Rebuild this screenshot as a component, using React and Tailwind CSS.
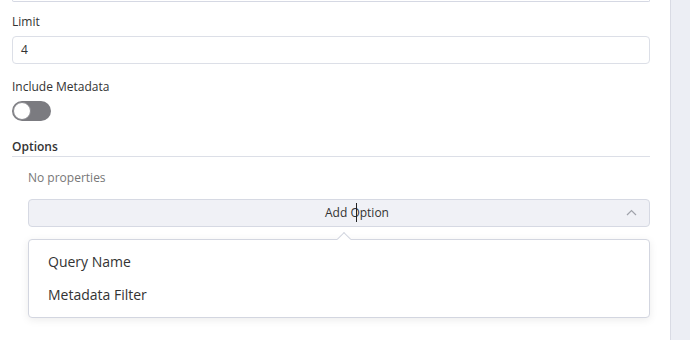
import React from "react";

export default function App() {
  return (
    <div className="flex w-[690px] h-[340px] bg-white overflow-hidden text-[#333] [font-family:'Open_Sans',sans-serif]">
      <div className="flex-1 pl-3 pr-5">
        <div className="h-[2px] border-x border-b border-[#d5d8e3] rounded-b-[3px]" />
        <div className="mt-[12px] text-[12px] leading-[16px]">Limit</div>
        <div className="mt-[6px] h-[28px] border border-[#dcdfe7] rounded-[4px] flex items-center px-2 text-[12px]">4</div>
        <div className="mt-[15px] text-[12px] leading-[16px]">Include Metadata</div>
        <div className="mt-[6px] w-[39px] h-[20px] rounded-full bg-[#7b7b80] relative">
          <div className="absolute left-[1px] top-[1px] w-[18px] h-[18px] rounded-full bg-white border border-[#8a8a8f]" />
        </div>
        <div className="mt-[18px] text-[12px] leading-[16px] font-semibold">Options</div>
        <div className="mt-[1px] h-px bg-[#dcdfe7]" />
        <div className="pl-4">
          <div className="mt-[13px] text-[12px] leading-[16px] text-[#777]">No properties</div>
          <div className="mt-[13px] h-[28px] bg-[#f0f1f6] border border-[#d6d9e3] rounded-[4px] flex items-center justify-center pl-[36px] relative text-[12px]">
            <span className="relative">
              Add Option
              <span className="absolute left-[31px] top-[-1px] w-px h-[19px] bg-[#222]" />
            </span>
            <svg className="absolute right-[12px] top-[9px]" width="11" height="7" viewBox="0 0 11 7" fill="none">
              <path d="M1 6 L5.5 1.5 L10 6" stroke="#a0a3ab" strokeWidth="1.2" />
            </svg>
          </div>
          <div className="mt-[12px] relative h-[79px] bg-white border border-[#d3d6e0] rounded-[4px] shadow-[0_2px_8px_rgba(0,0,0,0.08)] flex flex-col justify-center gap-[13px] pl-[19px] text-[14px] leading-[20px]">
            <div className="absolute left-[310px] top-[-6px] w-[10px] h-[10px] bg-white border-l border-t border-[#d3d6e0] rotate-45" />
            <div>Query Name</div>
            <div>Metadata Filter</div>
          </div>
        </div>
      </div>
      <div className="w-[20px] bg-[#eceef4] border-l border-[#d9dbe4]" />
    </div>
  );
}
